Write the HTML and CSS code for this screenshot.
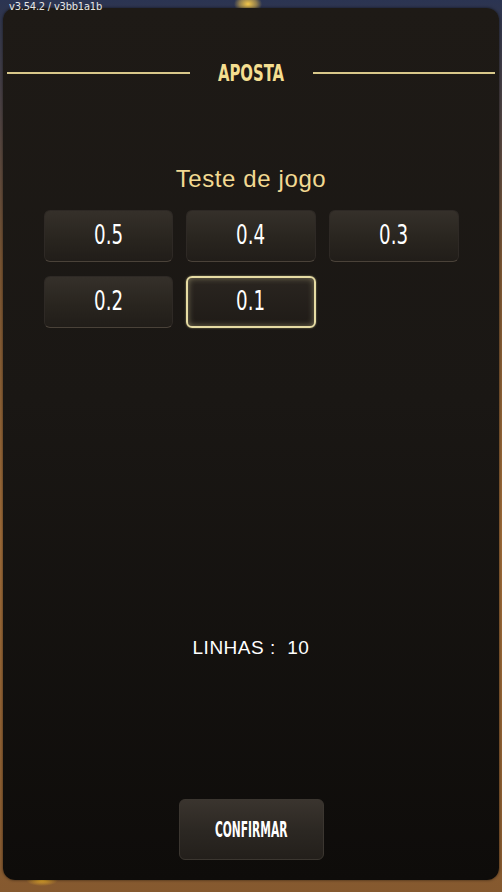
FILE: index.html
```html
<!DOCTYPE html>
<html lang="pt">
	<head>
		<meta charset="utf-8" />
		<meta name="viewport" content="width=device-width, initial-scale=1.0" />
		<title>Aposta</title>
		<link rel="stylesheet" href="styles.css">
	</head>
	<body>
		<div class="version">v3.54.2 / v3bb1a1b</div>

		<div class="panel">
			<div class="panel-header">
				<span class="rule"></span>
				<h1><span>APOSTA</span></h1>
				<span class="rule"></span>
			</div>

			<h2 class="game-name">Teste de jogo</h2>

			<div class="bets">
				<button class="bet"><span>0.5</span></button>
				<button class="bet"><span>0.4</span></button>
				<button class="bet"><span>0.3</span></button>
				<button class="bet"><span>0.2</span></button>
				<button class="bet selected"><span>0.1</span></button>
			</div>

			<p class="lines">LINHAS :  10</p>

			<button class="confirm"><span>CONFIRMAR</span></button>
		</div>
	</body>
</html>
```

FILE: styles.css
```css
html,
body {
	height: 100%;
}

body {
	margin: 0;
	position: relative;
	overflow: hidden;
	font-family: 'Liberation Sans', Arial, sans-serif;
	background:
		radial-gradient(ellipse 14px 10px at 248px 4px, #f3c64a 0%, rgba(243, 198, 74, 0.5) 60%, rgba(243, 198, 74, 0) 100%),
		radial-gradient(ellipse 16px 6px at 42px 880px, rgba(240, 180, 40, 0.9) 0%, rgba(240, 180, 40, 0) 100%),
		linear-gradient(180deg, #2b3452 0, #33374a 3%, #7a5532 30%, #9c6a38 60%, #85592f 100%);
}

.version {
	position: absolute;
	top: 1px;
	left: 9px;
	z-index: 2;
	color: #e6e6e6;
	font-family: 'DejaVu Sans Condensed', sans-serif;
	font-size: 11px;
	line-height: 12px;
	letter-spacing: -0.2px;
}

.panel {
	box-sizing: border-box;
	height: 872px;
	margin: 8px 3px 0;
	padding: 51px 4px 20px;
	border-radius: 12px;
	background: linear-gradient(180deg, #1e1a16 0%, #1a1714 45%, #0e0c0a 100%);
	box-shadow: 0 0 3px rgba(0, 0, 0, 0.6);
	display: flex;
	flex-direction: column;
	align-items: center;
}

.panel-header {
	align-self: stretch;
	display: flex;
	align-items: center;
	height: 28px;
}

.rule {
	flex: 1;
	height: 2px;
	background: #d8c88a;
}

h1 {
	width: 123px;
	margin: 0;
	text-align: center;
	color: #f4de90;
	font-family: 'DejaVu Sans Condensed', sans-serif;
	font-size: 23px;
	font-weight: 700;
	line-height: 28px;
}

h1 span {
	display: inline-block;
	transform: scaleX(0.72);
}

.game-name {
	margin: 78px 0 0;
	color: #f2d992;
	font-size: 24px;
	font-weight: 400;
	line-height: 28px;
	letter-spacing: 0.6px;
}

.bets {
	margin-top: 17px;
	width: 415px;
	display: grid;
	grid-template-columns: repeat(3, 1fr);
	grid-auto-rows: 52px;
	gap: 14px 13px;
}

.bet {
	border: 1px solid #2e2925;
	border-bottom-color: #4a4239;
	border-radius: 6px;
	background: linear-gradient(180deg, #35302a 0%, #29251f 55%, #211d19 100%);
	color: #ffffff;
	font-family: 'DejaVu Sans Condensed', sans-serif;
	font-size: 26px;
	padding: 0 0 2px;
}

.bet span {
	display: inline-block;
	transform: scaleX(0.78);
}

.bet.selected {
	border: 2px solid #e6dca4;
	background: linear-gradient(180deg, #2a2520 0%, #1f1b17 100%);
	box-shadow: inset 0 0 6px rgba(230, 220, 164, 0.45), 0 0 2px rgba(230, 220, 164, 0.6);
}

.lines {
	margin: 309px 0 0;
	color: #ffffff;
	font-size: 19px;
	line-height: 22px;
	letter-spacing: 0.5px;
	white-space: pre;
}

.confirm {
	margin-top: auto;
	width: 145px;
	height: 61px;
	border: 1px solid #3b3630;
	border-radius: 6px;
	background: linear-gradient(180deg, #3a342e 0%, #2c2823 50%, #231f1b 100%);
	color: #ffffff;
	font-family: 'DejaVu Sans Condensed', sans-serif;
	font-size: 22px;
	font-weight: 700;
	padding: 0;
}

.confirm span {
	display: inline-block;
	transform: scaleX(0.54);
}
```
